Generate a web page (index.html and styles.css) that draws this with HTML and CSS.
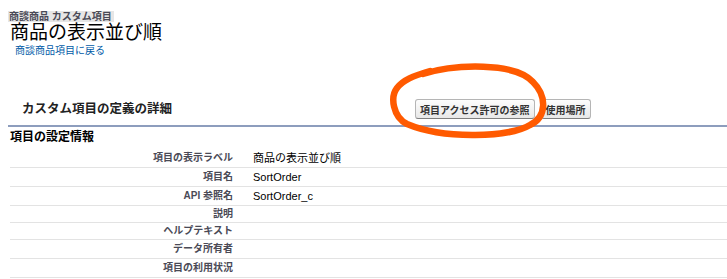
FILE: index.html
```html
<!DOCTYPE html>
<html lang="ja">
<head>
    <meta charset="UTF-8">
    <meta name="viewport" content="width=device-width, initial-scale=1.0">
    <title>商品の表示並び順 - カスタム項目</title>
    <link rel="stylesheet" href="styles.css">
</head>
<body>
    <div class="page">
        <div class="header">
            <div class="crumb"><span>商談商品 カスタム項目</span></div>
            <h1>商品の表示並び順</h1>
            <a class="back" href="#">商談商品項目に戻る</a>
        </div>

        <div class="detail">
            <div class="detail-head">
                <h2>カスタム項目の定義の詳細</h2>
                <div class="buttons">
                    <button class="btn">項目アクセス許可の参照</button>
                    <button class="btn">使用場所</button>
                </div>
            </div>

            <h3>項目の設定情報</h3>
            <div class="rows">
                <div class="row"><div class="label">項目の表示ラベル</div><div class="value">商品の表示並び順</div></div>
                <div class="row"><div class="label">項目名</div><div class="value">SortOrder</div></div>
                <div class="row"><div class="label">API 参照名</div><div class="value">SortOrder_c</div></div>
                <div class="row short"><div class="label">説明</div><div class="value"></div></div>
                <div class="row short"><div class="label">ヘルプテキスト</div><div class="value"></div></div>
                <div class="row"><div class="label">データ所有者</div><div class="value"></div></div>
                <div class="row"><div class="label">項目の利用状況</div><div class="value"></div></div>
            </div>
        </div>

        <!-- hand drawn highlight round the first button -->
        <svg class="mark" width="170" height="85" viewBox="0 0 170 85">
            <path d="M38 12 C70 2, 130 0, 148 20 C162 34, 162 55, 145 63 C125 75, 60 78, 22 62 C8 55, 5 35, 12 26 C18 18, 28 14, 45 9"
                  fill="none" stroke="#ff5a00" stroke-width="6.5" stroke-linecap="round"/>
        </svg>
    </div>
</body>
</html>
```

FILE: styles.css
```css
body {
    margin: 0;
    background: #fff;
    font-family: "Liberation Sans", "Noto Sans CJK JP", sans-serif;
    color: #000;
}
.page {
    position: relative;
    padding: 11px 0 0 8px;
}
.crumb {
    font-size: 10px;
    line-height: 11px;
    font-weight: bold;
    color: #4a4a56;
}
.crumb span {
    background: #e6e6e6;
    padding: 0 2px 0 1px;
}
h1 {
    margin: 0 0 0 2px;
    font-size: 19px;
    line-height: 21px;
    font-weight: normal;
}
.back {
    display: block;
    margin: 2px 0 0 7px;
    font-size: 10px;
    line-height: 12px;
    color: #015ba7;
    text-decoration: none;
}
.detail-head {
    display: grid;
    grid-template-columns: 407px auto;
    align-items: center;
    height: 32px;
    margin-top: 36px;
    border-bottom: 2px solid #8d9dbd;
}
h2 {
    margin: 0 0 0 14px;
    font-size: 12.5px;
    line-height: 16px;
    color: #222;
}
.buttons {
    display: flex;
    gap: 6px;
}
.btn {
    height: 20px;
    padding: 0 4px;
    font-family: inherit;
    font-size: 10px;
    font-weight: bold;
    color: #333;
    background: linear-gradient(#fdfdfd, #e8e8e8);
    border: 1px solid #b5b5b5;
    border-bottom-color: #7f7f7f;
    border-radius: 3px;
    cursor: pointer;
}
h3 {
    margin: 3px 0 5px 2px;
    font-size: 12px;
    line-height: 14px;
    color: #000;
}
.rows {
    margin-left: 2px;
}
.row {
    display: grid;
    grid-template-columns: 223px 1fr;
    column-gap: 20px;
    height: 18px;
    line-height: 18px;
    border-bottom: 1px solid #e3e3e3;
}
.row.short {
    height: 16px;
    line-height: 16px;
}
.label {
    text-align: right;
    font-size: 10px;
    font-weight: bold;
    color: #4a4a56;
}
.value {
    font-size: 11px;
}
.mark {
    position: absolute;
    left: 385px;
    top: 62px;
}
```
